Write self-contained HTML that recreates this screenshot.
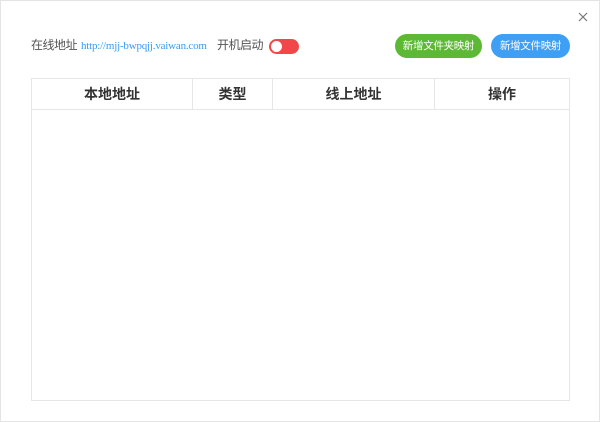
<!DOCTYPE html>
<html><head><meta charset="utf-8"><style>
*{margin:0;padding:0;box-sizing:border-box}
body{width:600px;height:422px;background:#fff;font-family:"Liberation Sans","Noto Sans CJK SC",sans-serif;position:relative;overflow:hidden}
.frame{position:absolute;left:0;top:0;width:600px;height:422px;border:1px solid #e4e4e4}
.t{position:absolute;font-size:12px;color:#555;top:37px;line-height:16px;letter-spacing:-0.5px}
.link{position:absolute;left:81px;top:38px;font-family:"Liberation Serif",serif;font-size:11px;line-height:16px;color:#3a9bf0;letter-spacing:-0.2px}
.tog{position:absolute;left:269px;top:39px;width:30px;height:15px;border-radius:8px;background:#f2474a}
.tog:after{content:"";position:absolute;left:2px;top:2px;width:11px;height:11px;border-radius:50%;background:#fff}
.btn{position:absolute;top:34px;height:24px;border-radius:12px;color:#fff;font-size:10.5px;text-align:center;line-height:24px;letter-spacing:-0.3px}
table{position:absolute;left:31px;top:78px;width:539px;height:323px;border-collapse:collapse;border:1px solid #e6e6e6}
th{height:31px;border:1px solid #e6e6e6;font-size:14px;font-weight:bold;color:#333}
td{border:none}
.x{position:absolute;left:578px;top:12px}
</style></head><body>
<div class="frame"></div>
<svg class="x" width="10" height="10" viewBox="0 0 10 10"><path d="M1 1L9 9M9 1L1 9" stroke="#777" stroke-width="1.2"/></svg>
<div class="t" style="left:31px">在线地址</div>
<div class="link">http://mjj-bwpqjj.vaiwan.com</div>
<div class="t" style="left:217px">开机启动</div>
<div class="tog"></div>
<div class="btn" style="left:395px;width:87px;background:#5db935">新增文件夹映射</div>
<div class="btn" style="left:491px;width:79px;background:#3e9ff5">新增文件映射</div>
<table><tr><th style="width:161px">本地地址</th><th style="width:80px">类型</th><th style="width:162px">线上地址</th><th>操作</th></tr><tr><td colspan="4"></td></tr></table>
</body></html>
